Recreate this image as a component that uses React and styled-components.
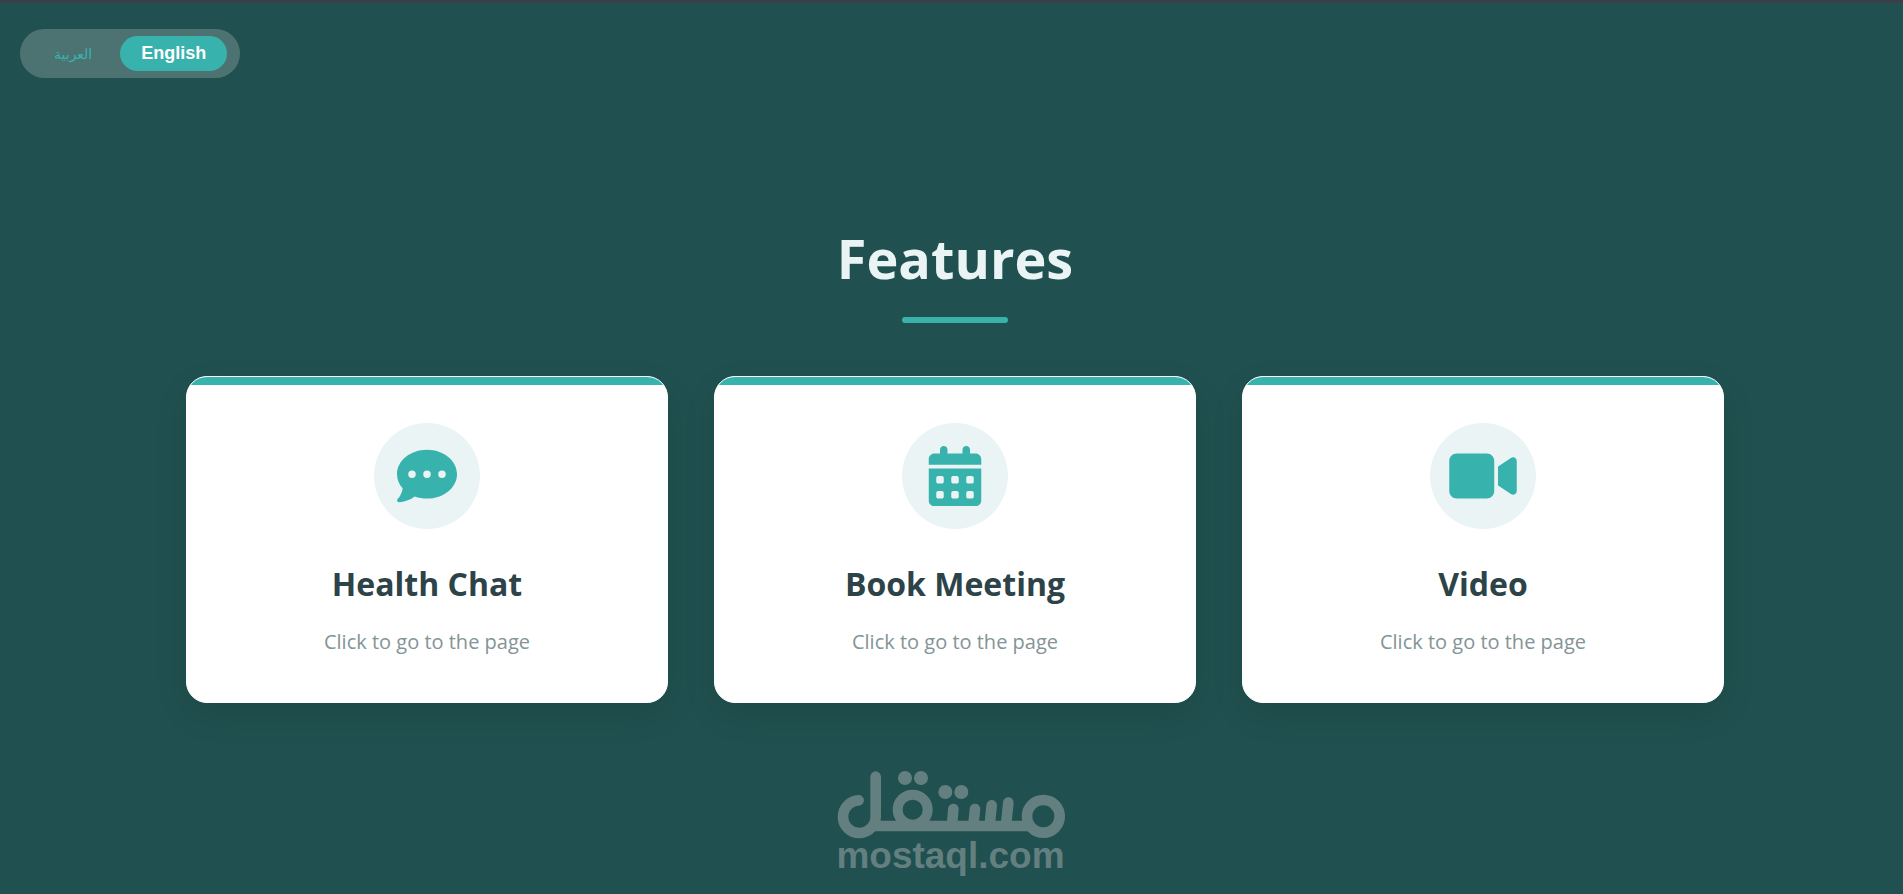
import { useState } from "react";
import styled, { createGlobalStyle } from "styled-components";
import { FaCalendarDays, FaCommentDots, FaVideo } from "react-icons/fa6";

const GlobalStyle = createGlobalStyle`
  * {
    box-sizing: border-box;
  }

  body {
    margin: 0;
    background: #20504f;
    font-family: "Segoe UI", "Open Sans", sans-serif;
  }
`;

const Page = styled.div`
  display: flex;
  flex-direction: column;
  min-height: 100vh;
  border-top: 3px solid #3c3f47;
`;

const Header = styled.header`
  display: flex;
  padding: 26px 20px 0;
`;

const LanguageSwitch = styled.div`
  display: flex;
  gap: 7px;
  padding: 7px 13px;
  border-radius: 25px;
  background: rgba(255, 255, 255, 0.2);
`;

const LanguageButton = styled.button`
  height: 35px;
  padding: 0 21px;
  border: none;
  border-radius: 18px;
  background: ${({ $active }) => ($active ? "#38b2ac" : "transparent")};
  color: ${({ $active }) => ($active ? "#ffffff" : "#38b2ac")};
  font-family: "Liberation Sans", "DejaVu Sans", sans-serif;
  font-size: 18px;
  font-weight: bold;
  cursor: pointer;

  &:lang(ar) {
    font-size: 14px;
    font-weight: normal;
  }
`;

const Features = styled.main`
  display: flex;
  flex-direction: column;
  align-items: center;
  padding: 140px 179px 0 186px;
`;

const FeaturesTitle = styled.h1`
  margin: 0;
  color: #ebf4f5;
  font-size: 54px;
  font-weight: bold;
  line-height: 80px;
`;

const TitleLine = styled.div`
  width: 106px;
  height: 6px;
  margin: 19px 0 53px;
  border-radius: 3px;
  background: #38b2ac;
`;

const CardGrid = styled.div`
  display: grid;
  grid-template-columns: repeat(3, 1fr);
  gap: 46px;
  width: 100%;
`;

const Card = styled.a`
  display: flex;
  flex-direction: column;
  align-items: center;
  overflow: hidden;
  padding-bottom: 40px;
  border: 1px solid #ffffff;
  border-radius: 21px;
  background: #ffffff;
  box-shadow: 0 12px 35px rgba(0, 0, 0, 0.08);
  text-decoration: none;
`;

const CardStripe = styled.div`
  width: 100%;
  height: 8px;
  background: #38b2ac;
`;

const CardIcon = styled.div`
  display: flex;
  align-items: center;
  justify-content: center;
  width: 106px;
  height: 106px;
  margin: 38px 0 32px;
  border-radius: 50%;
  background: #ebf4f5;
  color: #38b2ac;

  svg {
    width: 68px;
    height: 60px;
  }
`;

const CardTitle = styled.h2`
  margin: 0 0 15px;
  color: #2c4348;
  font-size: 32px;
  font-weight: bold;
  line-height: 46px;
`;

const CardText = styled.p`
  margin: 0;
  color: #839496;
  font-size: 20px;
  line-height: 40px;
`;

const Brand = styled.footer`
  display: flex;
  flex-direction: column;
  align-items: center;
  padding: 67px 2px 20px 0;
  color: #637f7f;
  font-family: "Liberation Sans", sans-serif;
  font-size: 37px;
  font-weight: bold;
  line-height: 34px;
`;

const features = [
  { title: "Health Chat", icon: FaCommentDots },
  { title: "Book Meeting", icon: FaCalendarDays },
  { title: "Video", icon: FaVideo },
];

function BrandLogo() {
  return (
    <svg
      width="230"
      height="69"
      viewBox="48 60 690 207"
      fill="none"
      stroke="currentColor"
      strokeWidth="32"
      strokeLinecap="round"
      aria-hidden="true"
    >
      <path d="M116 151A49 49 0 1 0 167 199V80" />
      <path d="M152 228H634" strokeLinecap="butt" />
      <circle cx="278" cy="179" r="45" strokeWidth="30" />
      <path d="M400 177L396 226M465 177L460 226M515 166L509 226M565 158L558 226" />
      <circle cx="670" cy="199" r="49" />
      <g fill="currentColor" stroke="none">
        <circle cx="255" cy="84" r="21" />
        <circle cx="303" cy="84" r="21" />
        <circle cx="376" cy="126" r="21" />
        <circle cx="424" cy="126" r="21" />
      </g>
    </svg>
  );
}

function FeatureCard({ title, icon: Icon }) {
  return (
    <Card href="#">
      <CardStripe />
      <CardIcon>
        <Icon />
      </CardIcon>
      <CardTitle>{title}</CardTitle>
      <CardText>Click to go to the page</CardText>
    </Card>
  );
}

function App() {
  const [language, setLanguage] = useState("en");

  return (
    <Page>
      <GlobalStyle />
      <Header>
        <LanguageSwitch>
          <LanguageButton
            lang="ar"
            $active={language === "ar"}
            onClick={() => setLanguage("ar")}
          >
            العربية
          </LanguageButton>
          <LanguageButton
            $active={language === "en"}
            onClick={() => setLanguage("en")}
          >
            English
          </LanguageButton>
        </LanguageSwitch>
      </Header>
      <Features>
        <FeaturesTitle>Features</FeaturesTitle>
        <TitleLine />
        <CardGrid>
          {features.map((feature) => (
            <FeatureCard key={feature.title} {...feature} />
          ))}
        </CardGrid>
      </Features>
      <Brand>
        <BrandLogo />
        <span>mostaql.com</span>
      </Brand>
    </Page>
  );
}

export default App;
